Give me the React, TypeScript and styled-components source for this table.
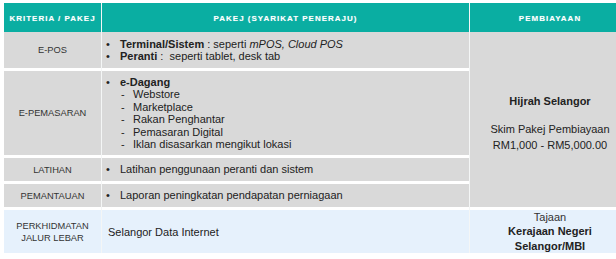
import styled, { createGlobalStyle } from "styled-components";

const TEAL = "#0aaea2";
const GREY = "#d9d9d9";
const BLUE = "#e6f1fc";
const INK = "#222222";

const GlobalStyle = createGlobalStyle`
  html, body {
    margin: 0;
    padding: 0;
    background: #ffffff;
  }
  body {
    font-family: "Liberation Sans", Arial, sans-serif;
    overflow: hidden;
  }
`;

type Tone = "grey" | "blue";

export default function App() {
  return (
    <>
      <GlobalStyle />
      <Page>
        <Table>
          <HeadCell>KRITERIA / PAKEJ</HeadCell>
          <HeadCell>PAKEJ (SYARIKAT PENERAJU)</HeadCell>
          <HeadCell>PEMBIAYAAN</HeadCell>

          <LabelCell $tone="grey">E-POS</LabelCell>
          <BodyCell $tone="grey">
            <List>
              <Item>
                <b>Terminal/Sistem</b> : seperti <i>mPOS, Cloud POS</i>
              </Item>
              <Item>
                <b>Peranti</b> :&nbsp; seperti tablet, desk tab
              </Item>
            </List>
          </BodyCell>
          <Financing>
            <Strong>Hijrah Selangor</Strong>
            <Spacer />
            <div>Skim Pakej Pembiayaan</div>
            <div>RM1,000 - RM5,000.00</div>
          </Financing>

          <LabelCell $tone="grey" $sep>
            E-PEMASARAN
          </LabelCell>
          <BodyCell $tone="grey" $sep>
            <List>
              <Item>
                <b>e-Dagang</b>
                <SubList>
                  <SubItem>Webstore</SubItem>
                  <SubItem>Marketplace</SubItem>
                  <SubItem>Rakan Penghantar</SubItem>
                  <SubItem>Pemasaran Digital</SubItem>
                  <SubItem>Iklan disasarkan mengikut lokasi</SubItem>
                </SubList>
              </Item>
            </List>
          </BodyCell>

          <LabelCell $tone="grey" $sep>
            LATIHAN
          </LabelCell>
          <BodyCell $tone="grey" $sep>
            <List>
              <Item>Latihan penggunaan peranti dan sistem</Item>
            </List>
          </BodyCell>

          <LabelCell $tone="grey" $sep>
            PEMANTAUAN
          </LabelCell>
          <BodyCell $tone="grey" $sep>
            <List>
              <Item>Laporan peningkatan pendapatan perniagaan</Item>
            </List>
          </BodyCell>

          <LabelCell $tone="blue" $sep>
            PERKHIDMATAN
            <br />
            JALUR LEBAR
          </LabelCell>
          <BodyCell $tone="blue" $sep>
            <Plain>Selangor Data Internet</Plain>
          </BodyCell>
          <Sponsor $tone="blue" $sep>
            <div>Tajaan</div>
            <Strong>Kerajaan Negeri</Strong>
            <Strong>Selangor/MBI</Strong>
          </Sponsor>
        </Table>
      </Page>
    </>
  );
}

const Page = styled.div`
  padding: 3px 0 0 4px;
  width: 640px;
`;

const Table = styled.div`
  display: grid;
  grid-template-columns: 97px 367px 160px;
  grid-template-rows: 29px 36px 87px 26px 26px 46px;
  column-gap: 1px;
  background: #f4f6f6;
  color: ${INK};
`;

const HeadCell = styled.div`
  background: ${TEAL};
  color: #ffffff;
  font-weight: bold;
  font-size: 8px;
  letter-spacing: 1px;
  display: flex;
  align-items: center;
  justify-content: center;
  padding-top: 1px;
  text-shadow: 0 0 1px rgba(255, 255, 255, 0.4);
`;

const Cell = styled.div<{ $tone: Tone; $sep?: boolean }>`
  background: ${(p) => (p.$tone === "grey" ? GREY : BLUE)};
  border-top: ${(p) => (p.$sep ? "3px solid #ffffff" : "0")};
  display: flex;
  align-items: center;
`;

const LabelCell = styled(Cell)`
  justify-content: center;
  text-align: center;
  font-size: 9.3px;
  line-height: 11.5px;
  color: #333333;
  padding-top: 2px;
`;

const BodyCell = styled(Cell)`
  font-size: 11px;
  line-height: 12.5px;
  padding-left: 4px;
`;

const List = styled.ul`
  list-style: none;
  margin: 0;
  padding: 0;
`;

const Item = styled.li`
  position: relative;
  padding-left: 14px;

  &::before {
    content: "•";
    position: absolute;
    left: 0;
    top: 0;
  }
`;

const SubList = styled.ul`
  list-style: none;
  margin: 0;
  padding: 0;
`;

const SubItem = styled.li`
  position: relative;
  padding-left: 13px;

  &::before {
    content: "-";
    position: absolute;
    left: 1px;
    top: 0;
  }
`;

const Plain = styled.div`
  padding-left: 2px;
  padding-top: 1px;
`;

const Financing = styled.div`
  grid-column: 3;
  grid-row: 2 / span 4;
  background: ${GREY};
  display: flex;
  flex-direction: column;
  justify-content: center;
  align-items: center;
  font-size: 11px;
  line-height: 16px;
  padding-top: 6px;
`;

const Sponsor = styled(Cell)`
  flex-direction: column;
  justify-content: center;
  font-size: 11px;
  line-height: 14.5px;
  color: ${INK};

  & > div:first-child {
    color: #333333;
  }
`;

const Strong = styled.div`
  font-weight: bold;
`;

const Spacer = styled.div`
  height: 12px;
`;
